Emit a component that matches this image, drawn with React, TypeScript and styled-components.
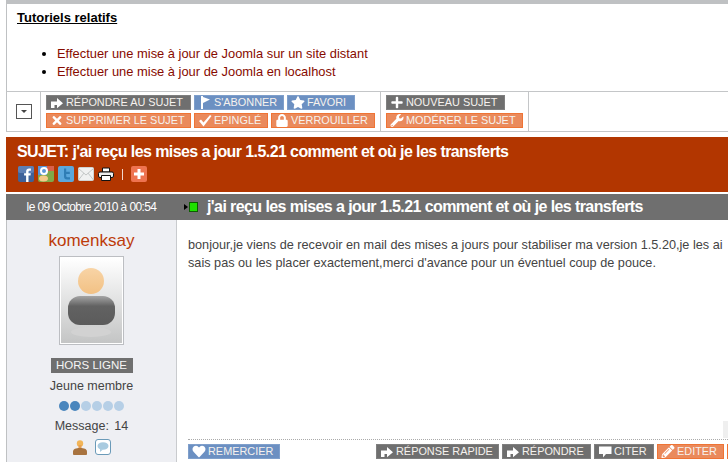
import React from "react";
import styled, { createGlobalStyle } from "styled-components";
import { FaStar, FaTimes, FaLock, FaPlus, FaWrench, FaHeart, FaPencilAlt } from "react-icons/fa";

const GlobalStyle = createGlobalStyle`
  html, body {
    margin: 0;
    padding: 0;
    background: #fff;
    overflow: hidden;
  }
  body {
    font-family: "Liberation Sans", Arial, sans-serif;
  }
`;

const Page = styled.div`
  width: 728px;
  height: 462px;
  overflow: hidden;
  padding-left: 6px;
  box-sizing: border-box;
`;

// ===================================
const Related = styled.section`
  height: 87px;
  border-top: 4px solid #bfc1c3;
  border-left: 1px solid #bfc1c3;
  padding-left: 10px;
`;

const RelatedTitle = styled.h3`
  margin: 0;
  padding-top: 6px;
  font-size: 13px;
  line-height: 15px;
  font-weight: bold;
  color: #000;
  text-decoration: underline;
`;

const RelatedList = styled.ul`
  margin: 20px 0 0;
  padding: 0 0 0 40px;
  font-size: 12.9px;
  line-height: 18px;
  color: #000;
`;

const RelatedLink = styled.li`
  color: #000;
  & > span {
    color: #870b00;
  }
`;

// ===================================
const Toolbar = styled.div`
  display: flex;
  height: 39px;
  border-top: 1px solid #c4c6c8;
  border-bottom: 1px solid #c4c6c8;
  border-left: 1px solid #bfc1c3;
`;

const ToggleCell = styled.div`
  width: 33px;
  display: flex;
  align-items: center;
  justify-content: center;
  border-right: 1px solid #c4c6c8;
`;

const Toggle = styled.div`
  width: 14px;
  height: 13px;
  border: 1px solid #555;
  display: flex;
  align-items: center;
  justify-content: center;
  &::after {
    content: "";
    border-left: 3px solid transparent;
    border-right: 3px solid transparent;
    border-top: 3px solid #444;
  }
`;

const ButtonCell = styled.div<{ $width: number }>`
  width: ${(p) => p.$width}px;
  box-sizing: border-box;
  padding: 3px 0 0 5px;
  display: flex;
  flex-direction: column;
  gap: 3px;
  border-right: 1px solid #c4c6c8;
`;

const ButtonRow = styled.div`
  display: flex;
  gap: 3px;
`;

const tones = {
  grey: { bg: "#6f6f6f", edge: "#7f7f7f" },
  blue: { bg: "#6c90c2", edge: "#7f9fcb" },
  orange: { bg: "#ea8a5c", edge: "#ef7435" },
};

const Btn = styled.span<{ $tone: keyof typeof tones; $width: number }>`
  display: inline-flex;
  align-items: center;
  gap: 2px;
  width: ${(p) => p.$width}px;
  height: 15px;
  box-sizing: border-box;
  padding-left: 3px;
  border: 1px solid ${(p) => tones[p.$tone].edge};
  background: ${(p) => tones[p.$tone].bg};
  color: #f6f2ee;
  font-size: 10.9px;
  line-height: 13px;
  white-space: nowrap;
  flex: none;
  & > svg {
    width: 14px;
    height: 13px;
    color: #fff;
    fill: #fff;
    flex: none;
  }
`;

const ReplyIcon = () => (
  <svg viewBox="0 0 14 13">
    <path d="M1 12V5.500h6V2l6 5.250-6 5V9H4.500v3z" />
  </svg>
);

const FlagIcon = () => (
  <svg viewBox="0 0 14 13">
    <path d="M3 0h2v13H3zM5 1l7 2.500L5 7z" />
  </svg>
);

const CheckIcon = () => (
  <svg viewBox="0 0 14 13">
    <path d="M1 7l2-1.500 2.500 3L12 1l1.500 1L5.500 12.500z" />
  </svg>
);

const BubbleIcon = () => (
  <svg viewBox="0 0 14 13">
    <path d="M1 1.500h12.500v7.500H8l-3 3.500V9H1z" />
  </svg>
);

// ===================================
const SubjectHeader = styled.header`
  margin-top: 5px;
  height: 55px;
  box-sizing: border-box;
  padding: 6px 0 0 11px;
  background: #b23600;
  color: #fff;
`;

const SubjectTitle = styled.h1`
  margin: 0;
  font-size: 16px;
  line-height: 18px;
  font-weight: bold;
  letter-spacing: -0.59px;
  white-space: nowrap;
`;

const ShareRow = styled.div`
  display: flex;
  align-items: center;
  gap: 4px;
  margin: 5px 0 0 1px;
  height: 16px;
`;

const ShareSeparator = styled.span`
  width: 1px;
  height: 11px;
  background: #f2d8cc;
  margin: 0 4px;
`;

const ShareIcon = styled.svg`
  width: 16px;
  height: 16px;
  flex: none;
  display: block;
`;

// ===================================
const PostBar = styled.div`
  margin-top: 2px;
  height: 26px;
  display: flex;
  align-items: center;
  background: #6f6f6f;
  color: #fff;
`;

const PostDate = styled.div`
  width: 171px;
  text-align: center;
  font-size: 12px;
  letter-spacing: -0.6px;
  flex: none;
`;

const OnlineMark = styled.span`
  display: flex;
  align-items: center;
  width: 24px;
  margin-left: 6px;
  flex: none;
  &::before {
    content: "";
    width: 0;
    height: 0;
    border-left: 4px solid #000;
    border-top: 3px solid transparent;
    border-bottom: 3px solid transparent;
    margin-left: 1px;
    margin-right: 1px;
    flex: none;
  }
  &::after {
    content: "";
    width: 7px;
    height: 8px;
    background: #1fe000;
    border: 1px solid #0b5e00;
    flex: none;
  }
`;

const PostTitle = styled.h2`
  margin: 0;
  font-size: 16px;
  font-weight: bold;
  white-space: nowrap;
  letter-spacing: -0.59px;
`;

// ===================================
const PostBody = styled.div`
  display: flex;
  height: 242px;
`;

const Author = styled.aside`
  width: 171px;
  flex: none;
  box-sizing: border-box;
  background: #eeeff3;
  border-left: 1px solid #bfc1c3;
  border-right: 1px solid #c9cbce;
  display: flex;
  flex-direction: column;
  align-items: center;
  color: #444;
`;

const AuthorName = styled.div`
  margin-top: 11px;
  font-size: 17px;
  line-height: 20px;
  color: #bd3b0a;
`;

const Avatar = styled.div`
  margin-top: 5px;
  width: 65px;
  height: 89px;
  box-sizing: border-box;
  border: 1px solid #bcbec2;
  padding: 1px;
  background: #fff;
  & > svg {
    display: block;
    width: 100%;
    height: 100%;
  }
`;

const Status = styled.div`
  margin-top: 13px;
  width: 82px;
  height: 15px;
  line-height: 15px;
  text-align: center;
  background: #6f6f6f;
  color: #f5f5f5;
  font-size: 11.5px;
`;

const Rank = styled.div`
  margin-top: 4px;
  font-size: 12.5px;
  line-height: 18px;
`;

const Pips = styled.div`
  margin-top: 6px;
  display: flex;
  gap: 1px;
`;

const Pip = styled.span<{ $on?: boolean }>`
  width: 10px;
  height: 10px;
  border-radius: 50%;
  background: ${(p) => (p.$on ? "#4a86bd" : "#b6cfe6")};
`;

const MessageCount = styled.div`
  margin-top: 6px;
  font-size: 12.5px;
  line-height: 18px;
  word-spacing: 2px;
`;

const AuthorIcons = styled.div`
  margin-top: 4px;
  display: flex;
  align-items: center;
  gap: 8px;
  & > svg {
    display: block;
  }
`;

const Content = styled.div`
  flex: 1;
  min-width: 0;
  display: flex;
  flex-direction: column;
  padding-left: 11px;
  overflow: hidden;
`;

const Message = styled.div`
  flex: 1;
  padding-top: 16px;
  font-size: 12.7px;
  line-height: 18px;
  color: #444;
  white-space: nowrap;
  position: relative;
`;

const ScrollStub = styled.span`
  position: absolute;
  right: 0;
  bottom: 1px;
  width: 5px;
  height: 17px;
  background: #efefef;
`;

const Actions = styled.div`
  height: 23px;
  box-sizing: border-box;
  border-top: 1px dotted #aaa;
  padding-top: 4px;
  display: flex;
  justify-content: space-between;
`;

const ActionGroup = styled.div`
  display: flex;
  gap: 3px;
`;

const HiddenEdge = styled.span`
  width: 1px;
  height: 15px;
  background: #ef7435;
`;

const Share = ({ children }: { children: React.ReactNode }) => (
  <ShareIcon viewBox="0 0 16 16">{children}</ShareIcon>
);

export default function App() {
  return (
    <Page>
      <GlobalStyle />
      <Related>
        <RelatedTitle>Tutoriels relatifs</RelatedTitle>
        <RelatedList>
          <RelatedLink>
            <span>Effectuer une mise à jour de Joomla sur un site distant</span>
          </RelatedLink>
          <RelatedLink>
            <span>Effectuer une mise à jour de Joomla en localhost</span>
          </RelatedLink>
        </RelatedList>
      </Related>

      <Toolbar>
        <ToggleCell>
          <Toggle />
        </ToggleCell>
        <ButtonCell $width={340}>
          <ButtonRow>
            <Btn $tone="grey" $width={145}>
              <ReplyIcon />
              RÉPONDRE AU SUJET
            </Btn>
            <Btn $tone="blue" $width={90}>
              <FlagIcon />
              S'ABONNER
            </Btn>
            <Btn $tone="blue" $width={68}>
              <FaStar />
              FAVORI
            </Btn>
          </ButtonRow>
          <ButtonRow>
            <Btn $tone="orange" $width={145}>
              <FaTimes />
              SUPPRIMER LE SUJET
            </Btn>
            <Btn $tone="orange" $width={74}>
              <CheckIcon />
              EPINGLÉ
            </Btn>
            <Btn $tone="orange" $width={104}>
              <FaLock />
              VERROUILLER
            </Btn>
          </ButtonRow>
        </ButtonCell>
        <ButtonCell $width={148}>
          <ButtonRow>
            <Btn $tone="grey" $width={119}>
              <FaPlus />
              NOUVEAU SUJET
            </Btn>
          </ButtonRow>
          <ButtonRow>
            <Btn $tone="orange" $width={137}>
              <FaWrench />
              MODÉRER LE SUJET
            </Btn>
          </ButtonRow>
        </ButtonCell>
      </Toolbar>

      <SubjectHeader>
        <SubjectTitle>
          SUJET: j'ai reçu les mises a jour 1.5.21 comment et où je les transferts
        </SubjectTitle>
        <ShareRow>
          <Share>
            <rect width="16" height="16" rx="2" fill="#3f6299" />
            <rect width="16" height="7" rx="2" fill="#5d7fb3" />
            <path d="M10.500 16V9.600h2l.3-2.400h-2.300V5.800c0-.7.2-1.100 1.200-1.100h1.200V2.600c-.3 0-1-.1-1.800-.1-1.800 0-3 1.100-3 3.100v1.600h-2v2.400h2V16z" fill="#fff" />
          </Share>
          <Share>
            <rect width="16" height="16" rx="2" fill="#7fa94a" />
            <rect x="9" width="7" height="5" fill="#d9604a" />
            <rect width="9" height="9" fill="#5b95d8" />
            <circle cx="6" cy="5" r="3" fill="none" stroke="#fff" strokeWidth="2" />
            <ellipse cx="5.500" cy="12.500" rx="4.500" ry="3" fill="#f3c98a" />
          </Share>
          <Share>
            <rect width="16" height="16" rx="2" fill="#5ba7dc" />
            <path d="M6 2.500v8c0 1.800 1 3 3 3h3v-2.300H9.400c-.8 0-1.200-.4-1.200-1.100V8h3.600V5.800H8.200V2.500z" fill="#2f7db5" />
          </Share>
          <Share>
            <rect x=".5" y="1.500" width="15" height="13" rx="1" fill="#f0f1f1" stroke="#cfd2d2" />
            <path d="M.5 2.500l7.500 6.500 7.500-6.500M.5 14l5.500-7M15.500 14L10 7" fill="none" stroke="#c2c6c6" />
          </Share>
          <Share>
            <path d="M4.500 2h7v4h-7z" fill="#fff" stroke="#111" />
            <rect x=".5" y="6" width="15" height="5.500" rx="1.500" fill="#eee" stroke="#111" />
            <path d="M3.500 9.500h9v5h-9z" fill="#fff" stroke="#111" />
          </Share>
          <ShareSeparator />
          <Share>
            <rect width="16" height="16" rx="2" fill="#ee7350" />
            <path d="M6.500 3h3v3.500H13v3H9.500V13h-3V9.500H3v-3h3.500z" fill="#fff" />
          </Share>
        </ShareRow>
      </SubjectHeader>

      <PostBar>
        <PostDate>le 09 Octobre 2010 à 00:54</PostDate>
        <OnlineMark />
        <PostTitle>j'ai reçu les mises a jour 1.5.21 comment et où je les transferts</PostTitle>
      </PostBar>

      <PostBody>
        <Author>
          <AuthorName>komenksay</AuthorName>
          <Avatar>
            <svg viewBox="0 0 61 85" preserveAspectRatio="none">
              <defs>
                <linearGradient id="avatarBg" x1="0" y1="0" x2="0" y2="1">
                  <stop offset="0" stopColor="#ffffff" />
                  <stop offset="1" stopColor="#c4c5c5" />
                </linearGradient>
                <linearGradient id="avatarHead" x1="0" y1="0" x2="0" y2="1">
                  <stop offset="0" stopColor="#f8d4a6" />
                  <stop offset="1" stopColor="#f2c184" />
                </linearGradient>
                <linearGradient id="avatarBody" x1="0" y1="0" x2="0" y2="1">
                  <stop offset="0" stopColor="#a5a5a5" />
                  <stop offset="0.35" stopColor="#626262" />
                  <stop offset="1" stopColor="#5b5b5b" />
                </linearGradient>
              </defs>
              <rect width="61" height="85" fill="url(#avatarBg)" />
              <circle cx="30" cy="23" r="13" fill="url(#avatarHead)" />
              <rect x="7" y="38" width="47" height="29" rx="12" fill="url(#avatarBody)" />
              <ellipse cx="30" cy="74" rx="20" ry="5" fill="#d2d2d2" />
            </svg>
          </Avatar>
          <Status>HORS LIGNE</Status>
          <Rank>Jeune membre</Rank>
          <Pips>
            <Pip $on />
            <Pip $on />
            <Pip />
            <Pip />
            <Pip />
            <Pip />
          </Pips>
          <MessageCount>Message: 14</MessageCount>
          <AuthorIcons>
            <svg width="14" height="15" viewBox="0 0 14 15">
              <circle cx="7" cy="3.500" r="3.200" fill="#f2b558" />
              <rect x="5.500" y="5" width="3" height="4" fill="#e8a050" />
              <path d="M0 11.500C0 9 3 8 7 8s7 1 7 3.500V14c0 .5-.5 1-1 1H1c-.5 0-1-.5-1-1z" fill="#a8733f" />
            </svg>
            <svg width="16" height="16" viewBox="0 0 16 16">
              <rect x=".5" y=".5" width="15" height="15" rx="2.500" fill="#fff" stroke="#6a9ab8" />
              <ellipse cx="8" cy="7" rx="5.500" ry="3.800" fill="#a9cbe0" />
              <path d="M5 10l0 3 3-2.500z" fill="#a9cbe0" />
            </svg>
          </AuthorIcons>
        </Author>
        <Content>
          <Message>
            bonjour,je viens de recevoir en mail des mises a jours pour stabiliser ma version 1.5.20,je les ai
            <br />
            sais pas ou les placer exactement,merci d'avance pour un éventuel coup de pouce.
            <ScrollStub />
          </Message>
          <Actions>
            <Btn $tone="blue" $width={92}>
              <FaHeart />
              REMERCIER
            </Btn>
            <ActionGroup>
              <Btn $tone="grey" $width={123}>
                <ReplyIcon />
                RÉPONSE RAPIDE
              </Btn>
              <Btn $tone="grey" $width={89}>
                <ReplyIcon />
                RÉPONDRE
              </Btn>
              <Btn $tone="grey" $width={60}>
                <BubbleIcon />
                CITER
              </Btn>
              <Btn $tone="orange" $width={67}>
                <FaPencilAlt />
                EDITER
              </Btn>
              <HiddenEdge />
            </ActionGroup>
          </Actions>
        </Content>
      </PostBody>
    </Page>
  );
}
